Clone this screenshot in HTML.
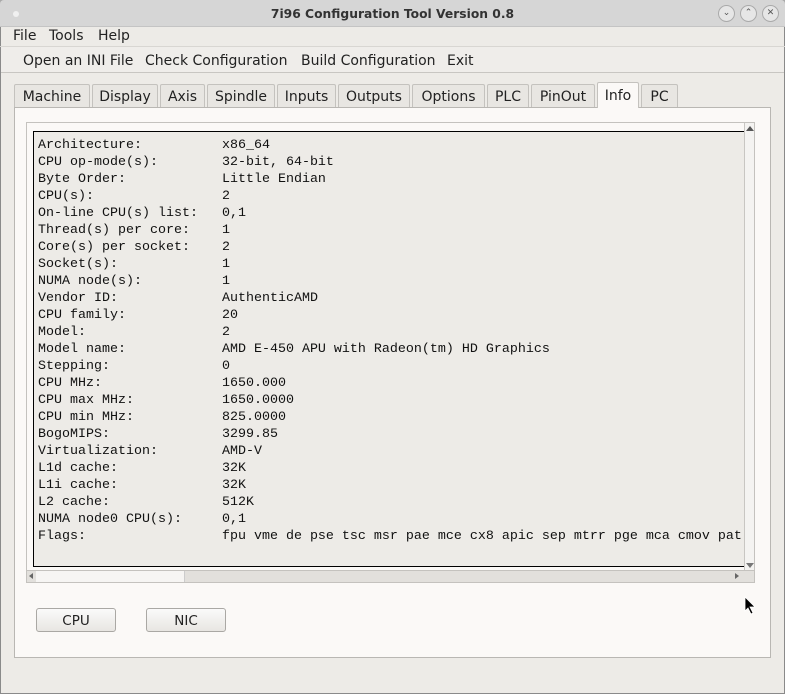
<!DOCTYPE html>
<html><head><meta charset="utf-8"><style>
*{box-sizing:border-box;margin:0;padding:0}
body{width:785px;height:694px;background:#a8a8a8;font-family:"DejaVu Sans","Liberation Sans",sans-serif;position:relative;overflow:hidden}
.win{position:absolute;left:0;top:0;width:785px;height:694px;background:#edebe7;box-shadow:inset 0 0 0 1px #8a8a8a;border-radius:4px 4px 0 0}
.title{position:absolute;left:0;top:0;width:785px;height:27px;background:#d6d6d6;border-bottom:1px solid #c4c4c4;text-align:center;font-weight:bold;font-size:12.3px;line-height:29px;color:#333;border-radius:4px 4px 0 0}
.dot{position:absolute;left:13px;top:11px;width:6px;height:6px;border-radius:50%;background:#f0f0f0}
.wb{position:absolute;top:5px;width:17px;height:17px;border-radius:50%;border:1px solid #aaa;background:#e6e6e6;font-size:9px;line-height:15px;text-align:center;color:#555;font-weight:normal}
.menu{position:absolute;top:27px;left:0;width:785px;height:20px;font-size:14px;color:#222;border-bottom:1px solid #d8d6d2}
.menu span{position:absolute;top:1px}
.tool{position:absolute;top:47px;left:1px;width:783px;height:26px;font-size:14px;color:#222;border-bottom:1px solid #c8c6c2;background:#efedea}
.tool span{position:absolute;top:6px}
.tab{position:absolute;top:84px;height:23px;border:1px solid #c4c2be;border-bottom:none;background:#e8e6e2;font-size:14px;color:#222;text-align:center;line-height:24px;border-radius:2px 2px 0 0}
.tab.sel{top:82px;height:26px;background:#fbf9f7;z-index:2;line-height:26px}
.panel{position:absolute;left:14px;top:107px;width:757px;height:551px;background:#fbf9f7;border:1px solid #b9b7b3}
.frame{position:absolute;left:26px;top:122px;width:729px;height:461px;border:1px solid #c4c2be;background:#fbf9f7}
.txt{position:absolute;left:33px;top:131px;width:712px;height:436px;border:1px solid #000;border-right:none;background:#edebe7;overflow:hidden}
pre{position:absolute;left:4px;top:5px;font-family:"Liberation Mono",monospace;font-size:13.33px;line-height:17px;color:#111;white-space:pre}
.vs{position:absolute;left:744px;top:123px;width:10px;height:447px;background:#f4f3f1;border-left:1px solid #c8c6c2}
.hs{position:absolute;left:27px;top:570px;width:727px;height:12px;background:#e2e0dc;border-top:1px solid #c4c2be}
.btn{position:absolute;top:608px;width:80px;height:24px;border:1px solid #aaa8a4;border-radius:3px;background:linear-gradient(#fafafa,#e8e6e2);font-size:13.5px;text-align:center;line-height:24px;color:#222}
</style></head><body>
<div class="win">
<div class="title"><div class="dot"></div>7i96 Configuration Tool Version 0.8
<div class="wb" style="left:718px">&#8964;</div><div class="wb" style="left:740px">&#8963;</div><div class="wb" style="left:762px">✕</div></div>
<div class="menu"><span style="left:13px">File</span><span style="left:49px">Tools</span><span style="left:98px">Help</span></div>
<div class="tool"><span style="left:22px">Open an INI File</span><span style="left:144px">Check Configuration</span><span style="left:300px">Build Configuration</span><span style="left:446px">Exit</span></div>
<div class="tab" style="left:14px;width:76px">Machine</div>
<div class="tab" style="left:92px;width:66px">Display</div>
<div class="tab" style="left:160px;width:45px">Axis</div>
<div class="tab" style="left:207px;width:68px">Spindle</div>
<div class="tab" style="left:277px;width:59px">Inputs</div>
<div class="tab" style="left:338px;width:72px">Outputs</div>
<div class="tab" style="left:412px;width:73px">Options</div>
<div class="tab" style="left:487px;width:42px">PLC</div>
<div class="tab" style="left:531px;width:64px">PinOut</div>
<div class="tab sel" style="left:597px;width:42px">Info</div>
<div class="tab" style="left:641px;width:37px">PC</div>
<div class="panel"></div>
<div class="frame"></div>
<div class="txt"><pre>Architecture:          x86_64
CPU op-mode(s):        32-bit, 64-bit
Byte Order:            Little Endian
CPU(s):                2
On-line CPU(s) list:   0,1
Thread(s) per core:    1
Core(s) per socket:    2
Socket(s):             1
NUMA node(s):          1
Vendor ID:             AuthenticAMD
CPU family:            20
Model:                 2
Model name:            AMD E-450 APU with Radeon(tm) HD Graphics
Stepping:              0
CPU MHz:               1650.000
CPU max MHz:           1650.0000
CPU min MHz:           825.0000
BogoMIPS:              3299.85
Virtualization:        AMD-V
L1d cache:             32K
L1i cache:             32K
L2 cache:              512K
NUMA node0 CPU(s):     0,1
Flags:                 fpu vme de pse tsc msr pae mce cx8 apic sep mtrr pge mca cmov pat</pre></div>
<div class="vs"><div style="position:absolute;left:1px;top:3px;width:0;height:0;border-left:4px solid transparent;border-right:4px solid transparent;border-bottom:5px solid #555"></div><div style="position:absolute;left:1px;top:440px;width:0;height:0;border-left:4px solid transparent;border-right:4px solid transparent;border-top:5px solid #777"></div></div>
<div class="hs"><div style="position:absolute;left:9px;top:0;width:149px;height:11px;background:#f6f5f3;border-right:1px solid #ccc"></div><div style="position:absolute;left:2px;top:2px;border-top:3px solid transparent;border-bottom:3px solid transparent;border-right:4px solid #666"></div><div style="position:absolute;left:708px;top:2px;border-top:3px solid transparent;border-bottom:3px solid transparent;border-left:4px solid #666"></div></div>
<div class="btn" style="left:36px">CPU</div>
<div class="btn" style="left:146px">NIC</div>
<svg style="position:absolute;left:744px;top:596px" width="14" height="20"><path d="M1 1 L1 15 L4 12 L7 18 L9 17 L6 11 L11 11 Z" fill="#000" stroke="#fff" stroke-width="0.8"/></svg>
</div>
</body></html>
